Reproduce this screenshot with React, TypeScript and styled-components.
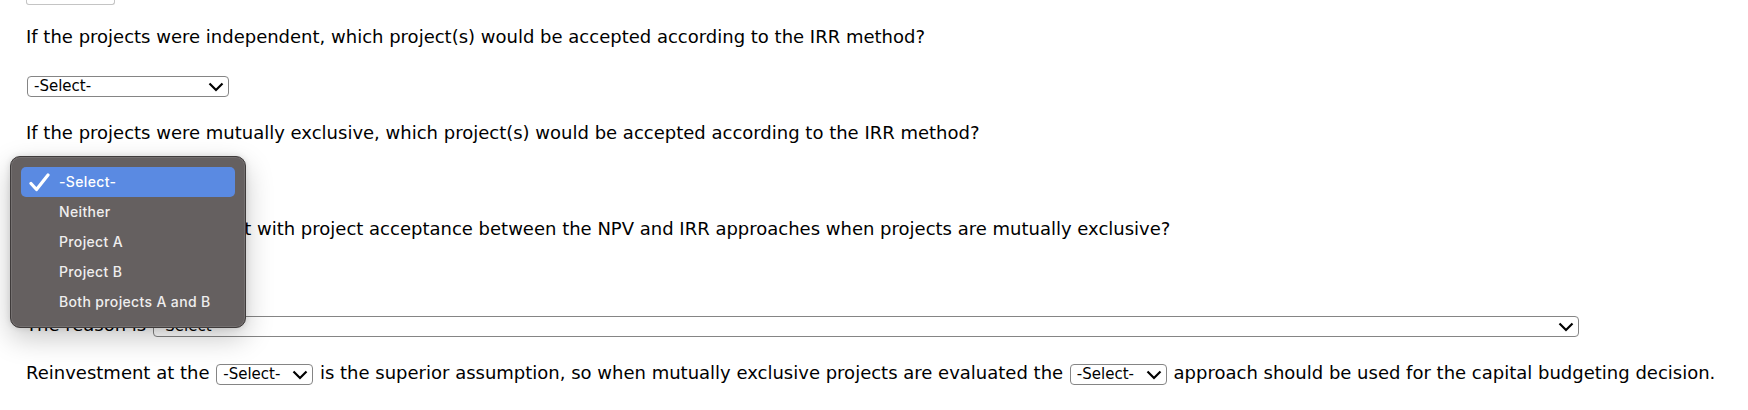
import React from 'react';
import styled, { createGlobalStyle } from 'styled-components';

const GlobalStyle = createGlobalStyle`
  html, body {
    margin: 0;
    padding: 0;
    background: #fff;
  }

  body {
    font-family: 'DejaVu Sans', Verdana, sans-serif;
    font-size: 18px;
    color: #000;
  }
`;

const Page = styled.div`
  display: flex;
  flex-direction: column;
  padding-left: 26px;
`;

const Stub = styled.div`
  width: 89px;
  height: 5px;
  box-sizing: border-box;
  border: 1px solid #c4c4c4;
  border-top: 0;
  border-radius: 0 0 3px 3px;
  margin-bottom: -4px;
`;

const Row = styled.div`
  height: 24px;
  line-height: 24px;
  margin-top: 24px;
  white-space: nowrap;
`;

const SelectWrap = styled.span`
  position: relative;
  display: inline-block;
  vertical-align: middle;
  margin: 0 1px;
  line-height: 0;
`;

const NativeSelect = styled.select<{ $width: number }>`
  appearance: none;
  -webkit-appearance: none;
  box-sizing: border-box;
  width: ${props => props.$width}px;
  height: 21px;
  margin: 0;
  padding: 0 24px 0 6px;
  border: 1px solid #858585;
  border-radius: 4px;
  background: #fff;
  font-family: 'DejaVu Sans', Verdana, sans-serif;
  font-size: 15px;
  line-height: 19px;
  color: #000;
`;

const Chevron = styled.svg`
  position: absolute;
  top: 6px;
  right: 5px;
  pointer-events: none;
`;

const Menu = styled.ul`
  position: absolute;
  z-index: 10;
  top: -16px;
  left: -17px;
  width: 236px;
  box-sizing: border-box;
  margin: 0;
  padding: 10px;
  list-style: none;
  background: #656060;
  border: 1px solid #3f3b3b;
  border-radius: 10px;
  box-shadow:
    inset 0 0 0 1px rgba(255, 255, 255, 0.1),
    0 10px 28px rgba(0, 0, 0, 0.22),
    0 0 6px rgba(0, 0, 0, 0.12);
  font-family: Inter, 'Liberation Sans', sans-serif;
  font-size: 14px;
  font-weight: 500;
  line-height: 30px;
  letter-spacing: 0.35px;
`;

const MenuItem = styled.li<{ $active?: boolean }>`
  position: relative;
  height: 30px;
  padding-left: 38px;
  border-radius: 5px;
  background: ${props => (props.$active ? '#5a8ae2' : 'transparent')};
  color: ${props => (props.$active ? '#fff' : '#efeeee')};
`;

const Check = styled.svg`
  position: absolute;
  top: 6px;
  left: 8px;
`;

interface SelectProps {
  width: number;
  options?: string[];
  open?: boolean;
}

function Select({ width, options = ['-Select-'], open }: SelectProps) {
  return (
    <SelectWrap>
      <NativeSelect $width={width} defaultValue={options[0]}>
        {options.map(option => (
          <option key={option}>{option}</option>
        ))}
      </NativeSelect>
      <Chevron width="16" height="10" viewBox="0 0 16 10">
        <path d="M1.5 1.5 L8 8 L14.5 1.5" fill="none" stroke="#000" strokeWidth="2.2" />
      </Chevron>
      {open && (
        <Menu>
          {options.map((option, i) => (
            <MenuItem key={option} $active={i === 0}>
              {i === 0 && (
                <Check width="21" height="19" viewBox="0 0 21 19">
                  <path
                    d="M2 10.5 L7.5 16.5 L19 2"
                    fill="none"
                    stroke="#fff"
                    strokeWidth="3.2"
                    strokeLinecap="round"
                    strokeLinejoin="round"
                  />
                </Check>
              )}
              {option}
            </MenuItem>
          ))}
        </Menu>
      )}
    </SelectWrap>
  );
}

const projectOptions = ['-Select-', 'Neither', 'Project A', 'Project B', 'Both projects A and B'];

export default function App() {
  return (
    <>
      <GlobalStyle />
      <Page>
        <Stub />
        <Row>If the projects were independent, which project(s) would be accepted according to the IRR method?</Row>
        <Row>
          <Select width={202} options={projectOptions} />
        </Row>
        <Row>If the projects were mutually exclusive, which project(s) would be accepted according to the IRR method?</Row>
        <Row>
          <Select width={202} options={projectOptions} open />
        </Row>
        <Row>
          Would there be a conflict with project acceptance between the NPV and IRR approaches when projects are mutually exclusive?
        </Row>
        <Row>
          <Select width={97} options={['-Select-', 'Yes', 'No']} />
        </Row>
        <Row>
          The reason is <Select width={1426} />
        </Row>
        <Row>
          Reinvestment at the <Select width={97} /> is the superior assumption, so when mutually exclusive projects are
          evaluated the <Select width={97} /> approach should be used for the capital budgeting decision.
        </Row>
      </Page>
    </>
  );
}
